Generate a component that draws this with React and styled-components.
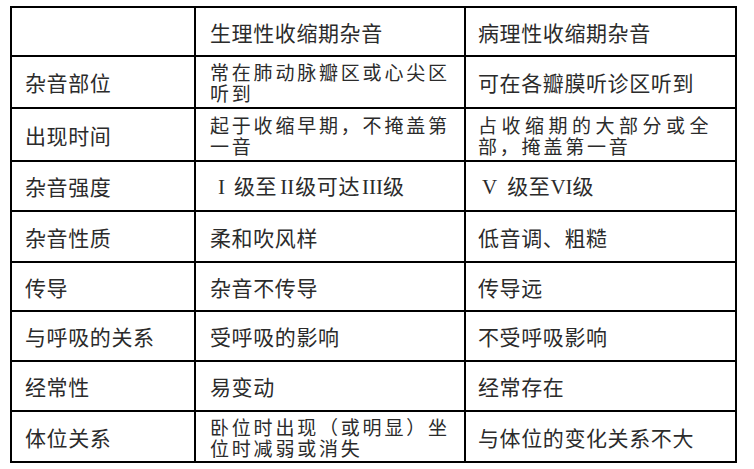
import styled, { createGlobalStyle } from "styled-components";

const GlobalStyle = createGlobalStyle`
  html, body {
    margin: 0;
    padding: 0;
    background: #ffffff;
  }
  body {
    font-family: "Noto Sans CJK SC", "Noto Sans", sans-serif;
    color: #2b2b2b;
  }
`;

// row heights measured from the picture (inner cell heights)
const ROW_HEIGHTS = [47, 50, 51, 48, 49, 47, 48, 48, 49];

const Roman = styled.span`
  font-family: "Liberation Serif", "Times New Roman", serif;
  font-size: 21px;
  letter-spacing: 0;
  margin-left: ${(p) => p.$l || 0}px;
  margin-right: ${(p) => p.$r || 0}px;
`;

const ROWS = [
  { head: "", a: ["生理性收缩期杂音"], b: ["病理性收缩期杂音"] },
  {
    head: "杂音部位",
    a: ["常在肺动脉瓣区或心尖区", "听到"],
    b: ["可在各瓣膜听诊区听到"],
  },
  {
    head: "出现时间",
    a: ["起于收缩早期，不掩盖第", "一音"],
    b: ["占收缩期的大部分或全", "部，掩盖第一音"],
    bWide: true,
  },
  {
    head: "杂音强度",
    a: [
      <>
        <Roman $l={8} $r={9}>I</Roman>级至<Roman $l={3} $r={1}>II</Roman>
        级可达<Roman $l={2}>III</Roman>级
      </>,
    ],
    b: [
      <>
        <Roman $l={4} $r={10}>V</Roman>级至<Roman>VI</Roman>级
      </>,
    ],
  },
  { head: "杂音性质", a: ["柔和吹风样"], b: ["低音调、粗糙"] },
  { head: "传导", a: ["杂音不传导"], b: ["传导远"] },
  { head: "与呼吸的关系", a: ["受呼吸的影响"], b: ["不受呼吸影响"] },
  { head: "经常性", a: ["易变动"], b: ["经常存在"] },
  {
    head: "体位关系",
    a: ["卧位时出现（或明显）坐", "位时减弱或消失"],
    b: ["与体位的变化关系不大"],
  },
];

const CellText = ({ lines, wide }) => {
  const tight = lines.length > 1;
  return (
    <Lines>
      {lines.map((line, i) => (
        <Line key={i} $tight={tight} $wide={wide && i === 0}>
          {line}
        </Line>
      ))}
    </Lines>
  );
};

const App = () => {
  return (
    <>
      <GlobalStyle />
      <Page>
        <Table $rows={ROW_HEIGHTS}>
          {ROWS.map((row, index) => (
            <Row key={index}>
              <Cell $pad={13}>
                <CellText lines={[row.head]} />
              </Cell>
              <Cell $pad={14}>
                <CellText lines={row.a} />
              </Cell>
              <Cell $pad={12}>
                <CellText lines={row.b} wide={row.bWide} />
              </Cell>
            </Row>
          ))}
        </Table>
      </Page>
    </>
  );
};
export default App;

const Page = styled.div`
  width: 754px;
  height: 469px;
  padding: 6px 0 0 10px;
  box-sizing: border-box;
  overflow: hidden;
`;

const Table = styled.div`
  display: grid;
  width: 727px;
  box-sizing: border-box;
  grid-template-columns: 182px 268px 269px;
  grid-template-rows: ${(p) => p.$rows.map((h) => `${h}px`).join(" ")};
  gap: 2px;
  padding: 2px;
  background: #000;
`;

const Row = styled.div`
  display: contents;
`;

const Cell = styled.div`
  background: #fff;
  display: flex;
  align-items: center;
  padding-left: ${(p) => p.$pad}px;
  overflow: hidden;
`;

const Lines = styled.div`
  display: flex;
  flex-direction: column;
`;

const Line = styled.div`
  white-space: nowrap;
  font-size: ${(p) => (p.$tight ? 19 : 21)}px;
  line-height: ${(p) => (p.$tight ? 21 : 24)}px;
  letter-spacing: ${(p) => (p.$wide ? 4.5 : p.$tight ? 2.8 : 0.6)}px;
`;
